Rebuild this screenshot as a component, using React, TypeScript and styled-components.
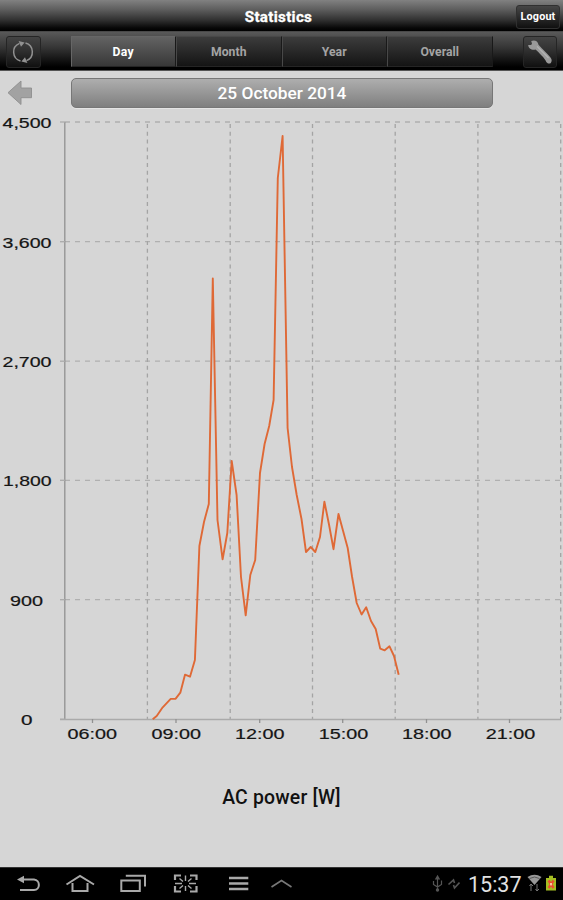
import React from "react";
import styled, { createGlobalStyle } from "styled-components";

const Global = createGlobalStyle`
  * { box-sizing: border-box; }
  body { margin: 0; background: #d6d6d6; overflow: hidden; }
`;

const Screen = styled.div`
  width: 563px;
  height: 900px;
  display: flex;
  flex-direction: column;
  background: #d6d6d6;
  font-family: Roboto, "Liberation Sans", sans-serif;
`;

const TitleBar = styled.header`
  height: 31px;
  flex: none;
  display: grid;
  grid-template-columns: 1fr auto 1fr;
  align-items: center;
  padding: 3px 3px 0 0;
  background: linear-gradient(#818181, #5c5c5c 32%, #303030 65%, #080808 90%, #000);
`;

const Title = styled.h1`
  grid-column: 2;
  margin: 0 0 0 -3px;
  font-size: 15.2px;
  font-weight: 700;
  line-height: 28px;
  letter-spacing: 0.3px;
  color: #fff;
  -webkit-text-stroke: 0.3px #fff;
`;

const LogoutButton = styled.button`
  justify-self: end;
  width: 44px;
  height: 24px;
  padding: 0;
  border: 1px solid #303030;
  border-radius: 3px;
  background: linear-gradient(#464646, #101010);
  color: #fff;
  font: 700 10.8px/20px Roboto, sans-serif;
  letter-spacing: 0.15px;
`;

const Toolbar = styled.nav`
  height: 40px;
  flex: none;
  display: flex;
  align-items: flex-start;
  padding: 4px 6px 0;
  border-top: 1px solid #494949;
  border-bottom: 1px solid #555;
  background: linear-gradient(#595959, #363636 40%, #111 75%, #000 92%);
`;

const IconButton = styled.button`
  width: 35px;
  height: 32px;
  padding: 0;
  display: flex;
  align-items: center;
  justify-content: center;
  border: 1px solid #252525;
  border-radius: 3px;
  background: linear-gradient(#444, #303030 45%, #101010);
`;

const Tabs = styled.div`
  display: flex;
  width: 422px;
  margin: 0 30px 0 30px;
  flex: none;
`;

const Tab = styled.button<{ $active?: boolean }>`
  flex: 1;
  height: 31px;
  padding: 0;
  border: 1px solid ${(p) => (p.$active ? "#666" : "#484848")};
  border-right-color: #191919;
  border-bottom-color: #252525;
  background: ${(p) => (p.$active ? "linear-gradient(#636363, #373737)" : "linear-gradient(#3c3c3c, #141414)")};
  color: ${(p) => (p.$active ? "#fff" : "#a4a4a4")};
  font: 700 12.2px/31px Roboto, sans-serif;
  letter-spacing: ${(p) => (p.$active ? "0.3px" : "0.05px")};
`;

const DateRow = styled.div`
  height: 44px;
  flex: none;
  display: flex;
  padding: 7px 7px 0;
`;

const BackButton = styled.button`
  width: 26px;
  height: 30px;
  padding: 0;
  border: 0;
  background: none;
  margin-right: 38px;
`;

const DateButton = styled.button`
  width: 422px;
  height: 30px;
  padding: 0;
  border: 1px solid #777;
  border-radius: 5px;
  background: linear-gradient(#aeaeae, #7f7f7f);
  box-shadow: 0 1px 0 #e4e4e4;
  color: #fff;
  font: 500 17.3px/29px Roboto, sans-serif;
  letter-spacing: 0;
`;

const ChartArea = styled.main`
  height: 636px;
  flex: none;
`;

const Svg = styled.svg`
  display: block;
  flex: none;
`;

const AxisLabel = styled.text`
  font-family: "Liberation Sans", Arial, sans-serif;
  font-size: 14.2px;
  fill: #151515;
  stroke: #151515;
  stroke-width: 0.2px;
`;

const Caption = styled.div`
  flex: 1;
  padding-top: 33px;
  text-align: center;
  font-size: 19.4px;
  font-weight: 500;
  line-height: 28px;
  letter-spacing: 0.2px;
  color: #111;
`;

const SystemBar = styled.footer`
  height: 33px;
  flex: none;
  display: flex;
  align-items: center;
  background: #000;
  border-top: 1px solid #333;
`;

const NavIcons = styled.div`
  width: 432px;
  height: 32px;
`;

const Clock = styled.time`
  width: 59px;
  margin-left: 8px;
  padding-top: 1px;
  color: #e2e2e2;
  font-size: 21.5px;
  line-height: 30px;
  white-space: nowrap;
`;

const StatusIcons = styled.div`
  width: 30px;
  height: 32px;
  display: flex;
`;

const TOP = 115;

const yTicks = [
  { label: "4,500", x: 2.5, y: 122, w: 49 },
  { label: "3,600", x: 2.5, y: 241.7, w: 49 },
  { label: "2,700", x: 2.5, y: 361.2, w: 49 },
  { label: "1,800", x: 3, y: 480.3, w: 48.5 },
  { label: "900", x: 10, y: 599.7, w: 33 },
  { label: "0", x: 21, y: 719.3, w: 11.5 },
];

const xTicks = [
  { label: "06:00", x: 92.5, start: 67.5 },
  { label: "09:00", x: 176, start: 151.5 },
  { label: "12:00", x: 259.7, start: 235 },
  { label: "15:00", x: 342.7, start: 318.7 },
  { label: "18:00", x: 426.5, start: 402 },
  { label: "21:00", x: 509.5, start: 485.7 },
];

const gridX = [147.4, 230.2, 312.5, 395.2, 477.9, 560.7];

const power: [number, number][] = [
  [152.7, 719.3], [156.7, 716], [162.7, 707.3], [170.7, 698.9], [175.7, 698.7],
  [180.3, 692.7], [185, 674.7], [190, 676.7], [194.9, 660], [199.4, 546],
  [204, 522], [208.8, 504], [212.8, 278.5], [217.5, 520], [222.6, 559.3],
  [227.3, 533], [231.7, 461], [236.6, 495], [241, 577], [245.7, 615.3],
  [250.3, 575], [255.2, 560], [260, 473], [264.6, 444], [269.2, 426],
  [273.6, 400], [277.8, 178], [282.6, 136], [287.6, 428], [292, 467],
  [296.7, 495], [301.5, 519], [306, 552], [310.7, 547], [315.3, 552],
  [320, 537], [324.4, 501.7], [329, 524.5], [333.5, 549.2], [338.5, 514],
  [343.1, 531], [347.7, 548], [352.1, 577], [356.7, 603], [361.6, 614.5],
  [366.2, 607.3], [371, 621], [375.7, 629], [380.2, 648.6], [384.7, 650.3],
  [389.5, 646.3], [394, 656], [398.7, 674.7],
];

const PowerChart = () => (
  <Svg width="563" height="636" viewBox={`0 ${TOP} 563 636`}>
    <g stroke="#b0b0b0" strokeWidth="1.3" strokeDasharray="5 5">
      {yTicks.slice(0, 5).map((t) => (
        <line key={t.label} x1="65" x2="561" y1={t.y} y2={t.y} />
      ))}
    </g>
    <g stroke="#a4a4a4" strokeWidth="1.3" strokeDasharray="4 3.8">
      {gridX.map((x) => (
        <line key={x} x1={x} x2={x} y1="124" y2="719" />
      ))}
    </g>
    <g stroke="#919191" strokeWidth="1.3">
      <line x1="64.8" x2="64.8" y1="122" y2="720" />
      <line x1="60" x2="561" y1="719.5" y2="719.5" stroke="#aaa" />
      {yTicks.map((t) => (
        <line key={t.label} x1="60" x2="65" y1={t.y} y2={t.y} stroke="#aaa" />
      ))}
      {xTicks.map((t) => (
        <line key={t.label} x1={t.x} x2={t.x} y1="719" y2="723" />
      ))}
    </g>
    <polyline
      points={power.map((p) => p.join(",")).join(" ")}
      fill="none"
      stroke="#df6936"
      strokeWidth="1.9"
      strokeLinejoin="round"
    />
    {yTicks.map((t) => (
      <AxisLabel key={t.label} x={t.x} y={t.y + 5.8} textLength={t.w} lengthAdjust="spacingAndGlyphs">
        {t.label}
      </AxisLabel>
    ))}
    {xTicks.map((t) => (
      <AxisLabel key={t.label} x={t.start} y="739.3" textLength="49.5" lengthAdjust="spacingAndGlyphs">
        {t.label}
      </AxisLabel>
    ))}
  </Svg>
);

const RefreshIcon = () => (
  <Svg width="22" height="24" viewBox="0 0 22 24" fill="none" stroke="#919191" strokeWidth="1.5">
    <path d="M8.5 21 A9.3 9.3 0 0 1 7.5 3.4" />
    <path d="M13.5 3 A9.3 9.3 0 0 1 14.5 20.6" />
    <path d="M6.6 1 L12.6 2.6 L9 6.8Z M15.4 23 L9.4 21.4 L13 17.2Z" fill="#919191" stroke="none" />
  </Svg>
);

const WrenchIcon = () => (
  <Svg width="26" height="26" viewBox="0 0 26 26">
    <path
      d="M1.2 6 L4.2 6 L5 4.4 L4.2 2 C7.4 0.6 11 1.8 11.5 5.8 C15.5 10.5 19.5 13.8 23.3 18.2 C25.4 20.4 24.8 22.6 23.6 24.2 C21.6 25.2 19.6 24.2 18.6 21.4 C15.6 17.2 12.2 14.2 8.6 10.6 C4.6 11.4 1.4 9.6 1.2 6Z"
      fill="#9a9a9a"
    />
    <path d="M10 7.4 L21.5 19" stroke="#b4b4b4" strokeWidth="1.2" />
  </Svg>
);

const BackArrow = () => (
  <Svg width="26" height="30" viewBox="7 78 26 30">
    <path
      d="M8 92.7 L21 81 V88 H31.5 V97.7 H21 V104.5Z"
      fill="#a2a2a2"
      stroke="#8f8f8f"
      strokeWidth=".9"
    />
  </Svg>
);

const NavigationGlyphs = () => (
  <Svg width="432" height="32" viewBox="0 868 432 32" fill="none" stroke="#a9a9a9" strokeWidth="2">
    <path d="M20 879.5 H34 C40.5 880 40.5 890 34 890 H20" />
    <path d="M17 879.5 L24 875.8 V883.2Z" fill="#a9a9a9" stroke="none" />
    <path d="M66.5 884.5 L80 876 L94 884.5 M72.5 883 V891 H87.5 V883" />
    <path d="M125.8 875.8 H145 V886.5" />
    <rect x="121.3" y="880.5" width="18.5" height="10.5" />
    <path d="M175 880 V875.5 H181 M190 875.5 H196.5 V880 M196.5 886 V891.5 H190 M181 891.5 H175 V886" strokeWidth="2.2" />
    <path d="M185.5 875.5 V881 M185.5 886 V891 M175 883.5 H182 M189 883.5 H196 M179.5 878.5 L183 881.5 M191.5 878.5 L188 881.5 M179.5 888.5 L183 885.5 M191.5 888.5 L188 885.5" strokeWidth="1.4" />
    <path d="M229 878 H248.3 M229 883.5 H248.3 M229 889 H248.3" strokeWidth="2.5" />
    <path d="M271.5 887 L281.5 880.5 L291.5 887" stroke="#777" strokeWidth="1.7" />
  </Svg>
);

const UsbGlyphs = () => (
  <Svg width="28" height="32" viewBox="432 868 28 32" fill="none" stroke="#555" strokeWidth="1.2">
    <path d="M437.5 878 V891 M433.5 881 V884.5 L437.5 887 L441.5 884.5 V880.5 M437.5 876 L435.8 879 H439.2Z" />
    <circle cx="437.5" cy="890" r="1.1" fill="#555" />
    <path d="M448.5 884.5 L453.5 880 L454.5 883 M459.5 882.5 L454.5 888 L453.5 885" strokeWidth="1.6" />
  </Svg>
);

const SignalAndBattery = () => (
  <Svg width="30" height="32" viewBox="527 868 30 32">
    <path d="M527.5 877 Q534.5 872.5 541.5 877 L534.5 885Z" fill="#999" />
    <path d="M529.5 878.5 Q534.5 875.5 539.5 878.5" stroke="#555" fill="none" />
    <path d="M531 891 V884 L529.5 886 M531 884 L533 886 M537 884 V891 L535.5 889 M537 891 L539 889" stroke="#777" fill="none" />
    <path d="M546 878 H549 V875.8 H553 V878 H556 V890.5 H546Z" fill="#a5bd22" />
    <path d="M548.6 880.5 L553.6 888 M553.6 880.5 L548.6 888" stroke="#ee4c32" strokeWidth="2.4" />
    <rect x="550" y="883" width="2" height="2.4" fill="#f7c59d" />
  </Svg>
);

export default function App() {
  return (
    <Screen>
      <Global />
      <TitleBar>
        <Title>Statistics</Title>
        <LogoutButton>Logout</LogoutButton>
      </TitleBar>
      <Toolbar>
        <IconButton aria-label="Refresh"><RefreshIcon /></IconButton>
        <Tabs>
          <Tab $active>Day</Tab>
          <Tab>Month</Tab>
          <Tab>Year</Tab>
          <Tab>Overall</Tab>
        </Tabs>
        <IconButton aria-label="Settings"><WrenchIcon /></IconButton>
      </Toolbar>
      <DateRow>
        <BackButton aria-label="Previous day"><BackArrow /></BackButton>
        <DateButton>25 October 2014</DateButton>
      </DateRow>
      <ChartArea><PowerChart /></ChartArea>
      <Caption>AC power [W]</Caption>
      <SystemBar>
        <NavIcons><NavigationGlyphs /></NavIcons>
        <UsbGlyphs />
        <Clock>15:37</Clock>
        <StatusIcons><SignalAndBattery /></StatusIcons>
      </SystemBar>
    </Screen>
  );
}
